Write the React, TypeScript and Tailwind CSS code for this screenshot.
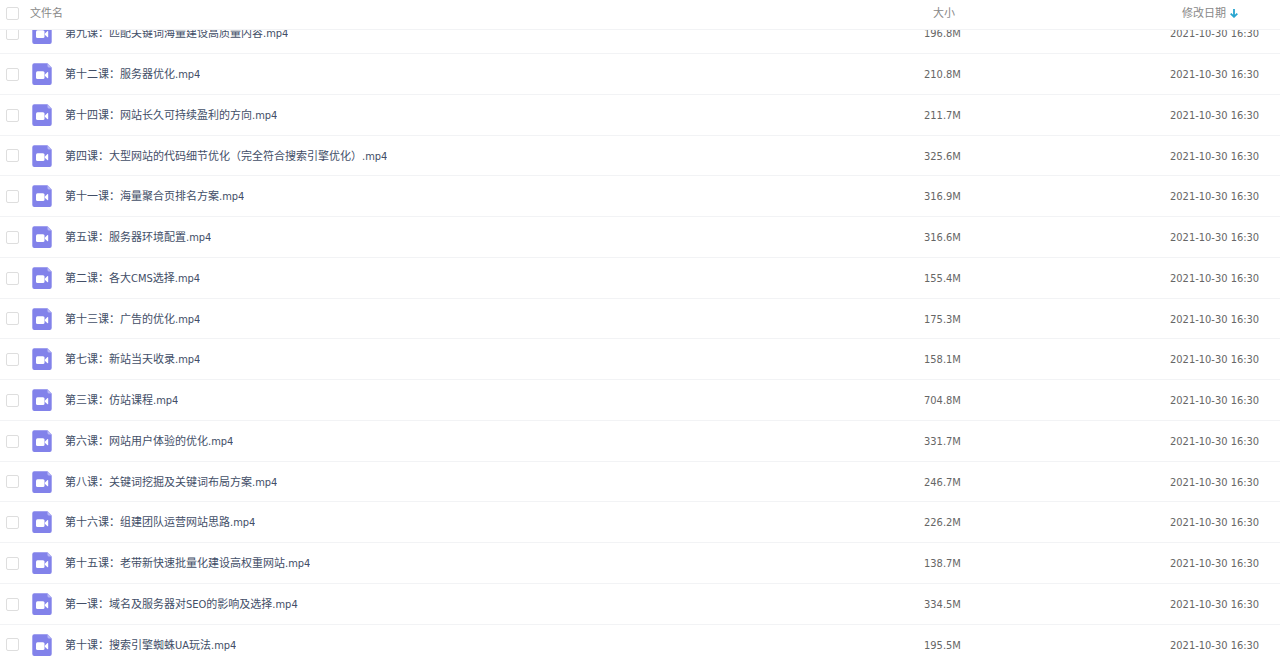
import { useLayoutEffect, useRef, useState } from 'react';

interface VideoFile {
  name: string;
  size: string;
  modified: string;
}

const files: VideoFile[] = [
  { name: '第九课：匹配关键词海量建设高质量内容.mp4', size: '196.8M', modified: '2021-10-30 16:30' },
  { name: '第十二课：服务器优化.mp4', size: '210.8M', modified: '2021-10-30 16:30' },
  { name: '第十四课：网站长久可持续盈利的方向.mp4', size: '211.7M', modified: '2021-10-30 16:30' },
  { name: '第四课：大型网站的代码细节优化（完全符合搜索引擎优化）.mp4', size: '325.6M', modified: '2021-10-30 16:30' },
  { name: '第十一课：海量聚合页排名方案.mp4', size: '316.9M', modified: '2021-10-30 16:30' },
  { name: '第五课：服务器环境配置.mp4', size: '316.6M', modified: '2021-10-30 16:30' },
  { name: '第二课：各大CMS选择.mp4', size: '155.4M', modified: '2021-10-30 16:30' },
  { name: '第十三课：广告的优化.mp4', size: '175.3M', modified: '2021-10-30 16:30' },
  { name: '第七课：新站当天收录.mp4', size: '158.1M', modified: '2021-10-30 16:30' },
  { name: '第三课：仿站课程.mp4', size: '704.8M', modified: '2021-10-30 16:30' },
  { name: '第六课：网站用户体验的优化.mp4', size: '331.7M', modified: '2021-10-30 16:30' },
  { name: '第八课：关键词挖掘及关键词布局方案.mp4', size: '246.7M', modified: '2021-10-30 16:30' },
  { name: '第十六课：组建团队运营网站思路.mp4', size: '226.2M', modified: '2021-10-30 16:30' },
  { name: '第十五课：老带新快速批量化建设高权重网站.mp4', size: '138.7M', modified: '2021-10-30 16:30' },
  { name: '第一课：域名及服务器对SEO的影响及选择.mp4', size: '334.5M', modified: '2021-10-30 16:30' },
  { name: '第十课：搜索引擎蜘蛛UA玩法.mp4', size: '195.5M', modified: '2021-10-30 16:30' },
];

const INITIAL_SCROLL = 17;

function VideoIcon() {
  return (
    <svg className="w-5 h-[22px] shrink-0" viewBox="0 0 20 22" aria-hidden="true">
      <path d="M2 .3h13.500l4.200 4.200v15.500a2 2 0 0 1-2 2H2.300a2 2 0 0 1-2-2V2.300a2 2 0 0 1 2-2Z" fill="#8282ea" />
      <path d="M15.500.3l4.200 4.200h-2.700a1.500 1.500 0 0 1-1.500-1.500Z" fill="#b9b9f5" />
      <rect x="4" y="8.300" width="8.500" height="7.600" rx="1.500" fill="#fff" />
      <path d="M12.800 11.700L15.200 9.300Q16.200 8.600 16.200 9.700v5q0 1-1 .3L12.800 12.700Z" fill="#fff" />
    </svg>
  );
}

function SortArrow() {
  return (
    <svg className="w-2 h-[9px] shrink-0" viewBox="0 0 8 9" fill="none" stroke="#27a5d0" strokeWidth="1.8" aria-hidden="true">
      <path d="M4 0v8M0.700 4.600L4 7.800l3.300-3.200" />
    </svg>
  );
}

interface CheckboxProps {
  label: string;
  checked: boolean;
  onChange: () => void;
}

function Checkbox({ label, checked, onChange }: CheckboxProps) {
  return (
    <input
      type="checkbox"
      aria-label={label}
      checked={checked}
      onChange={onChange}
      className="block appearance-none w-[13px] h-[13px] shrink-0 rounded-xs border border-[#dedede] bg-white checked:bg-[#27a5d0]"
    />
  );
}

export default function App() {
  const scroller = useRef<HTMLDivElement>(null);
  const [selected, setSelected] = useState<string[]>([]);
  const allSelected = selected.length === files.length;

  useLayoutEffect(() => {
    if (scroller.current) scroller.current.scrollTop = INITIAL_SCROLL;
  }, []);

  const toggle = (name: string) =>
    setSelected(prev => (prev.includes(name) ? prev.filter(n => n !== name) : [...prev, name]));

  return (
    <div
      ref={scroller}
      className="h-screen overflow-y-auto [scrollbar-width:none] bg-white text-[11px] leading-4 font-['DejaVu_Sans_Condensed','Noto_Sans_CJK_SC',sans-serif]"
    >
      <table className="w-full table-fixed border-separate border-spacing-0">
        <colgroup>
          <col />
          <col className="w-[246px]" />
          <col className="w-[110px]" />
        </colgroup>
        <thead className="text-left text-[#888888]">
          <tr className="h-[30px]">
            <th className="sticky top-0 z-10 bg-white border-b border-[#f2f3f5] p-0 pb-0.5 pl-1.5 font-normal">
              <div className="flex items-center gap-[11px]">
                <Checkbox
                  label="全选"
                  checked={allSelected}
                  onChange={() => setSelected(allSelected ? [] : files.map(f => f.name))}
                />
                文件名
              </div>
            </th>
            <th className="sticky top-0 z-10 bg-white border-b border-[#f2f3f5] p-0 pb-0.5 pl-[9px] font-normal">大小</th>
            <th className="sticky top-0 z-10 bg-white border-b border-[#f2f3f5] p-0 pb-0.5 pl-3 font-normal">
              <button type="button" className="flex items-center gap-1">
                修改日期
                <SortArrow />
              </button>
            </th>
          </tr>
        </thead>
        <tbody>
          {files.map(file => (
            <tr key={file.name} className="h-[41px] nth-[4n]:h-10">
              <td className="border-b border-[#f2f3f5] p-0 pl-1.5 text-[#424e67]">
                <div className="flex items-center">
                  <Checkbox
                    label={file.name}
                    checked={selected.includes(file.name)}
                    onChange={() => toggle(file.name)}
                  />
                  <div className="flex items-center gap-[13px] ml-[13px] min-w-0">
                    <VideoIcon />
                    <span className="truncate pt-0.5">{file.name}</span>
                  </div>
                </div>
              </td>
              <td className="border-b border-[#f2f3f5] p-0 pt-0.5 text-[#666666]">{file.size}</td>
              <td className="border-b border-[#f2f3f5] p-0 pt-0.5 text-[#666666]">{file.modified}</td>
            </tr>
          ))}
        </tbody>
      </table>
    </div>
  );
}
